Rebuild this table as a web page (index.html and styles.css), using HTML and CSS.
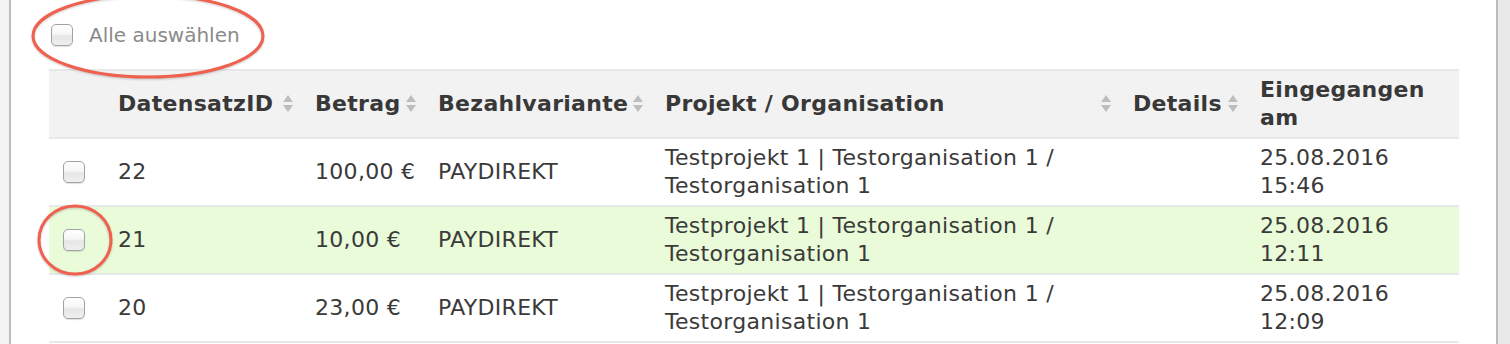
FILE: index.html
```html
<!DOCTYPE html>
<html lang="de">
<head>
<meta charset="utf-8">
<title>Spenden</title>
<link rel="stylesheet" href="styles.css">
</head>
<body>
<div class="panel">
  <div class="select-all">
    <label class="select-label"><input type="checkbox" class="cb"> <span>Alle auswählen</span></label>
    <svg class="ring ring-top" viewBox="0 0 240 92" width="240" height="92"><ellipse cx="117" cy="42" rx="115" ry="41" fill="none" stroke="#f0604f" stroke-width="3"/></svg>
  </div>
  <table class="grid">
    <colgroup>
      <col class="c0"><col class="c1"><col class="c2"><col class="c3"><col class="c4"><col class="c5"><col class="c6">
    </colgroup>
    <thead>
      <tr>
        <th></th>
        <th class="sortable">DatensatzID<svg class="sort" viewBox="0 0 10 17" width="10" height="17"><path d="M0 7 L5 0 L10 7 Z M0 10 L10 10 L5 17 Z"/></svg></th>
        <th class="sortable">Betrag<svg class="sort" viewBox="0 0 10 17" width="10" height="17"><path d="M0 7 L5 0 L10 7 Z M0 10 L10 10 L5 17 Z"/></svg></th>
        <th class="sortable">Bezahlvariante<svg class="sort" viewBox="0 0 10 17" width="10" height="17"><path d="M0 7 L5 0 L10 7 Z M0 10 L10 10 L5 17 Z"/></svg></th>
        <th class="sortable">Projekt / Organisation<svg class="sort" viewBox="0 0 10 17" width="10" height="17"><path d="M0 7 L5 0 L10 7 Z M0 10 L10 10 L5 17 Z"/></svg></th>
        <th class="sortable">Details<svg class="sort" viewBox="0 0 10 17" width="10" height="17"><path d="M0 7 L5 0 L10 7 Z M0 10 L10 10 L5 17 Z"/></svg></th>
        <th>Eingegangen am</th>
      </tr>
    </thead>
    <tbody>
      <tr>
        <td class="cbcell"><input type="checkbox" class="cb"></td>
        <td>22</td>
        <td class="amount">100,00 €</td>
        <td>PAYDIREKT</td>
        <td>Testprojekt 1 | Testorganisation 1 / Testorganisation 1</td>
        <td></td>
        <td class="date">25.08.2016 15:46</td>
      </tr>
      <tr class="selected">
        <td class="cbcell"><input type="checkbox" class="cb"><svg class="ring ring-row" viewBox="0 0 78 74" width="78" height="74"><ellipse cx="39" cy="37" rx="36" ry="34" fill="none" stroke="#f0604f" stroke-width="3"/></svg></td>
        <td>21</td>
        <td class="amount">10,00 €</td>
        <td>PAYDIREKT</td>
        <td>Testprojekt 1 | Testorganisation 1 / Testorganisation 1</td>
        <td></td>
        <td class="date">25.08.2016 12:11</td>
      </tr>
      <tr>
        <td class="cbcell"><input type="checkbox" class="cb"></td>
        <td>20</td>
        <td class="amount">23,00 €</td>
        <td>PAYDIREKT</td>
        <td>Testprojekt 1 | Testorganisation 1 / Testorganisation 1</td>
        <td></td>
        <td class="date">25.08.2016 12:09</td>
      </tr>
    </tbody>
  </table>
</div>
</body>
</html>
```

FILE: styles.css
```css
html, body {
  margin: 0;
  padding: 0;
}
body {
  background: linear-gradient(to right, #f3f3f3, #e9e9e9);
  font-family: "DejaVu Sans", Verdana, sans-serif;
  font-size: 20px;
  line-height: 28px;
  color: #3a3a3a;
  overflow: hidden;
  height: 344px;
}
.panel {
  margin: 0 12px 0 9px;
  border-left: 2px solid #bdbdbd;
  border-right: 2px solid #bdbdbd;
  background: #fff;
  height: 344px;
  padding: 0 38px;
  box-sizing: border-box;
}
.select-all {
  position: relative;
  z-index: 2;
  height: 69px;
  display: flex;
  align-items: center;
  padding: 0 0 0 2px;
  box-sizing: border-box;
}
.select-label {
  display: flex;
  align-items: center;
  gap: 16px;
  color: #8a8a8a;
}
.cb {
  appearance: none;
  -webkit-appearance: none;
  width: 22px;
  height: 22px;
  margin: 0;
  border: 1px solid #a3a3a3;
  border-radius: 5px;
  background: linear-gradient(#ffffff 0%, #f6f6f6 45%, #e6e6e6 55%, #efefef 100%);
  box-shadow: 0 1px 1px rgba(0,0,0,0.12);
  box-sizing: border-box;
  display: block;
}
.ring {
  position: absolute;
  z-index: 3;
  pointer-events: none;
  filter: drop-shadow(0 1px 1px rgba(0,0,0,0.2));
}
.ring-top {
  left: -18px;
  top: -6px;
}
.grid {
  width: 100%;
  border-collapse: collapse;
  table-layout: fixed;
  font-size: 22px;
  letter-spacing: 0.3px;
}
.c0 { width: 57px; }
.c1 { width: 197px; }
.c2 { width: 123px; }
.c3 { width: 227px; }
.c4 { width: 468px; }
.c5 { width: 127px; }
.c6 { width: 211px; }
.grid th, .grid td {
  text-align: left;
  vertical-align: middle;
  padding: 5px 8px 5px 12px;
  height: 56px;
}
.grid th {
  padding-right: 30px;
}
.grid thead th {
  background: #f2f2f2;
  font-weight: bold;
  color: #383838;
  border-top: 2px solid #e8e8e8;
  border-bottom: 2px solid #e8e8e8;
}
.grid td {
  border-bottom: 2px solid #e8e8e8;
}
.grid td.amount {
  white-space: nowrap;
}
.grid td.date {
  padding-right: 30px;
}
.sortable {
  position: relative;
}
.sort {
  position: absolute;
  right: 10px;
  top: 50%;
  margin-top: -9px;
  fill: #bdbdbd;
}
.grid td.cbcell {
  position: relative;
  padding-left: 14px;
}
.ring-row {
  left: -13px;
  top: 50%;
  margin-top: -37px;
}
.selected td {
  background: #e9fbd8;
}
```
